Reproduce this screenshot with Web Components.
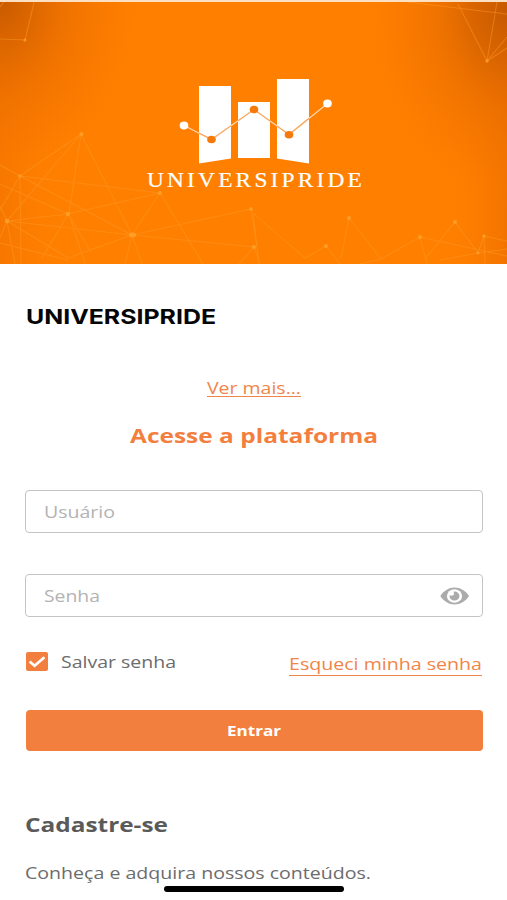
<!DOCTYPE html>
<html lang="pt-BR">
<head>
<meta charset="utf-8">
<title>Universipride</title>
<style>
html,body{margin:0;background:#fff}
body{width:507px;height:900px;overflow:hidden;font-family:"Open Sans","Noto Sans",sans-serif}
</style>
</head>
<body>
<login-page></login-page>
<script>
const define=(name,html,setup)=>customElements.define(name,class extends HTMLElement{
  connectedCallback(){
    if(this.shadowRoot)return;
    const root=this.attachShadow({mode:'open'});
    root.innerHTML=html;
    if(setup)setup(this,root);
  }
});

/* One line of wide text: its glyphs are scaled to the width attribute. */
define('wide-text',`<style>
:host{display:block;flex:none;white-space:nowrap}
span{display:inline-block;transform-origin:0 50%;vertical-align:top}
</style><span><slot></slot></span>`,(host,root)=>{
  const span=root.querySelector('span'),w=+host.getAttribute('width');
  host.style.width=w+'px';
  span.style.transform=`translateY(.6px) scaleX(${w/span.getBoundingClientRect().width})`;
});

define('hero-banner',`<style>
:host{display:block;height:264px}
svg{display:block}
</style>
<svg width="507" height="264" viewBox="0 0 507 264">
<defs>
<radialGradient id="l" gradientUnits="userSpaceOnUse" cx="0" cy="0" r="1" gradientTransform="scale(150 190)">
<stop offset="0" stop-color="#c85a00"/><stop offset=".25" stop-color="#d56100" stop-opacity=".75"/><stop offset=".5" stop-color="#e66b00" stop-opacity=".5"/><stop offset=".75" stop-color="#f27300" stop-opacity=".3"/><stop offset="1" stop-color="#ff7f00" stop-opacity="0"/></radialGradient>
<radialGradient id="r" gradientUnits="userSpaceOnUse" cx="0" cy="0" r="1" gradientTransform="translate(507 10) scale(150 200)">
<stop offset="0" stop-color="#c65a00"/><stop offset=".25" stop-color="#d36000" stop-opacity=".8"/><stop offset=".5" stop-color="#e46a00" stop-opacity=".5"/><stop offset=".75" stop-color="#f27300" stop-opacity=".3"/><stop offset="1" stop-color="#ff7f00" stop-opacity="0"/></radialGradient>
<linearGradient id="e"><stop offset="0" stop-color="#ee6f00" stop-opacity=".5"/><stop offset=".07" stop-color="#f87800" stop-opacity=".25"/><stop offset=".15" stop-color="#ff7f00" stop-opacity="0"/><stop offset=".87" stop-color="#ff7f00" stop-opacity="0"/><stop offset="1" stop-color="#e96c00" stop-opacity=".6"/></linearGradient>
</defs>
<rect width="507" height="264" fill="#ff7f00"/>
<rect width="507" height="264" fill="url(#e)"/>
<rect width="507" height="264" fill="url(#l)"/>
<rect width="507" height="264" fill="url(#r)"/>
<g fill="none" stroke="#ff9c28" stroke-opacity=".45" stroke-width="1.100">
<path d="M34 3L25 40L0 39M4 2L0 7"/>
<path d="M407 2L507 14M458 4L487 61L497 2M487 61L507 37M487 61L507 48"/>
<path d="M81 134L20 176M81 134L7 221L0 206M81 134L69 214L85 264M81 134L132 235M0 165L20 176L160 193L68 214L7 221M20 176L132 235M0 184L68 214M20 176L0 210M20 176L21 264M7 221L132 235L160 193L203 264M7 221L68 258L132 235M7 221L0 238M7 221L15 264M0 243L68 260M132 235L125 264M132 235L142 264M132 235L251 209L257 247M132 235L254 247L239 264M42 258L68 214M68 214L91 252"/>
<path d="M253 213L305 258L326 246M253 213L259 264M254 247L260 264M305 258L326 246L340 264M341 258L349 218L381 259L420 237L507 256M381 259L360 264M420 237L427 264M425 259L455 222L478 253L507 249M484 236L507 241M484 236L485 264M484 236L478 253L440 260"/>
</g>
<g fill="#ffab33" fill-opacity=".65"><circle cx="25" cy="40" r="1.600"/><circle cx="487" cy="61" r="1.800"/><circle cx="81.500" cy="134" r="2"/><circle cx="20" cy="176" r="1.700"/><circle cx="68" cy="214" r="2.200"/><circle cx="7" cy="221" r="2.200"/><ellipse cx="132.500" cy="235" rx="3.600" ry="2.400"/><circle cx="160" cy="193" r="2"/><circle cx="251" cy="209" r="1.900"/><circle cx="254" cy="247" r="2"/><circle cx="326" cy="246" r="2"/><circle cx="349" cy="218" r="2"/><circle cx="420" cy="237" r="2"/><circle cx="455" cy="222" r="2"/><circle cx="484" cy="236" r="1.800"/><circle cx="478" cy="253" r="1.500"/></g>
<path fill="#fff" d="M199 86H231V158.500L199 163.500ZM238 102H270V158H238ZM277 79H309V163.500L277 158.500Z"/>
<path d="M184 125.500L211.500 139.500L254 109.500L289 134.500L327.500 103.500" fill="none" stroke="#fff" stroke-width="1.100" opacity=".7"/>
<path d="M199 133.200L211.500 139.500L231 125.700M238 120.800L254 109.500L270 121M277 126L289 134.500L309 118.400" fill="none" stroke="#f9a860" stroke-width="1.400"/>
<g fill="#fff"><ellipse cx="184" cy="125.500" rx="4.300" ry="3.900"/><ellipse cx="327.500" cy="103.500" rx="4.300" ry="3.900"/></g>
<g fill="#f5790b"><ellipse cx="211.500" cy="139.500" rx="4.300" ry="3.800"/><ellipse cx="254" cy="109.500" rx="4.300" ry="3.800"/><ellipse cx="289" cy="134.700" rx="4.300" ry="3.800"/></g>
<text x="147" y="186.500" textLength="218" lengthAdjust="spacingAndGlyphs" font-family="Liberation Serif,serif" font-size="20.500" letter-spacing="2.800" fill="#fff" stroke="#fff" stroke-width=".2">UNIVERSIPRIDE</text>
<rect width="507" height="2" fill="#fbe0c3"/>
</svg>`);

define('eye-icon',`<style>:host{display:block;width:30px;height:18px;margin-top:1px}svg{display:block}</style>
<svg width="30" height="18" viewBox="0 0 30 18"><path d="M.3 9C4 3.500 9 .500 14.500 .500S25.500 3.500 29 9C25.500 14.500 20 17.500 14.500 17.500S4 14.500 .3 9Z" fill="#ababab"/><ellipse cx="14.500" cy="9" rx="7.600" ry="6.800" fill="#fff"/><path d="M14.500 4.600A5 4.500 0 1 1 9.600 8.200Q12 9.200 13.500 7.900Q14.900 6.400 13.400 4.800Q13.900 4.600 14.500 4.600Z" fill="#ababab"/></svg>`);

define('text-field',`<style>
:host{display:flex;box-sizing:border-box;height:43px;width:458px;border:1.500px solid #c4c4c4;border-radius:4px;align-items:center;justify-content:space-between;padding:0 12px 1px 18px;color:#b3b3b3;font-size:17px;line-height:24px}
</style><slot></slot><slot name="icon"></slot>`);

define('check-box',`<style>
:host{display:flex;align-items:center;gap:13px;margin-left:.5px;color:#6c6c6c;font-size:17px;line-height:24px}
svg{display:block}
</style><svg width="22" height="19" viewBox="0 0 22 19"><rect width="22" height="19" rx="2" fill="#f37f3f"/><path d="M3.600 9.500L8.600 13.700L18.400 5.300" fill="none" stroke="#fff" stroke-width="2.700"/></svg><slot></slot>`);

define('link-text',`<style>
:host{display:block;box-sizing:border-box;color:#f0854a;font-size:17px;line-height:24px;border-bottom:1px solid #f0854a}
</style><slot></slot>`);

define('primary-button',`<style>
:host{display:flex;box-sizing:border-box;width:457px;height:41px;align-items:center;justify-content:center;border-radius:4px;background:#f37f3f;color:#fff;font-weight:700;font-size:14.500px;line-height:24px;padding:0 1px 2px 0}
</style><slot></slot>`);

define('login-page',`<style>
:host{display:block;position:relative;width:507px;height:900px;overflow:hidden}
main{display:flex;flex-direction:column;padding:37px 25px 0}
.title{font:700 20.500px/30px Inter,sans-serif;color:#050505;margin-left:1px}
.more{align-self:center;margin-top:44px;height:22px;line-height:24px}
.access{align-self:center;margin-top:23px;font-weight:700;font-size:20px;line-height:30px;color:#f37f3f}
.user{margin-top:40px}.pass{margin-top:41px}
.row{display:flex;justify-content:space-between;align-items:flex-start;margin-top:32px;height:26px}
.forgot{margin-top:2px}
primary-button{margin-top:35px;margin-left:.5px}
.join{font-weight:700;font-size:20px;line-height:30px;color:#5a5a5a;margin-top:58px}
.about{font-size:17px;line-height:24px;color:#6c6c6c;margin-top:21px}
.home{position:absolute;left:164px;top:886px;width:180px;height:5.500px;border-radius:3px;background:#000}
</style>
<hero-banner></hero-banner>
<main>
<wide-text class="title" width="190">UNIVERSIPRIDE</wide-text>
<link-text class="more"><wide-text width="94">Ver mais...</wide-text></link-text>
<wide-text class="access" width="248">Acesse a plataforma</wide-text>
<text-field class="user"><wide-text width="71">Usuário</wide-text></text-field>
<text-field class="pass"><wide-text width="56">Senha</wide-text><eye-icon slot="icon"></eye-icon></text-field>
<div class="row"><check-box><wide-text width="115">Salvar senha</wide-text></check-box><link-text class="forgot"><wide-text width="193">Esqueci minha senha</wide-text></link-text></div>
<primary-button><wide-text width="54">Entrar</wide-text></primary-button>
<wide-text class="join" width="143">Cadastre-se</wide-text>
<wide-text class="about" width="346">Conheça e adquira nossos conteúdos.</wide-text>
</main>
<div class="home"></div>`);
</script>
</body>
</html>
